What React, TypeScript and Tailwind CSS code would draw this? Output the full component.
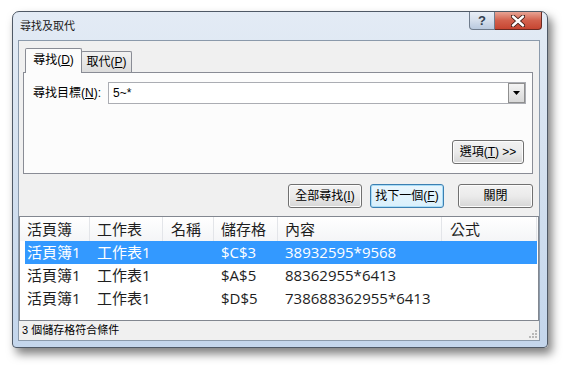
const cols = [
  { label: "活頁簿", w: "w-[70px]", pl: "pl-[7px]" },
  { label: "工作表", w: "w-[73px]", pl: "pl-[7px]" },
  { label: "名稱", w: "w-[51px]", pl: "pl-[8px]" },
  { label: "儲存格", w: "w-[64px]", pl: "pl-[7px]" },
  { label: "內容", w: "w-[164px]", pl: "pl-[7px]" },
  { label: "公式", w: "w-[95px]", pl: "pl-[8px]" },
];

const rows = [
  { book: "活頁簿1", sheet: "工作表1", cell: "$C$3", value: "38932595*9568", selected: true },
  { book: "活頁簿1", sheet: "工作表1", cell: "$A$5", value: "88362955*6413" },
  { book: "活頁簿1", sheet: "工作表1", cell: "$D$5", value: "738688362955*6413" },
];

function Btn({ children, wide, primary }: { children: React.ReactNode; wide?: string; primary?: boolean }) {
  return (
    <div
      className={`${wide ?? "w-[74px]"} h-[24px] flex items-center justify-center rounded-[3px] border ${
        primary
          ? "border-[#3c7fb1] shadow-[inset_0_0_0_1px_#a8dcf7] bg-gradient-to-b from-[#eaf6fd] to-[#d9f0fc]"
          : "border-[#707070] shadow-[inset_0_0_0_1px_#fcfcfc] bg-gradient-to-b from-[#f2f2f2] via-[#ebebeb] to-[#d6d6d6]"
      }`}
    >
      {children}
    </div>
  );
}

export default function App() {
  return (
    <div className="w-[567px] h-[368px] bg-white pl-[12px] pt-[11px] font-['Liberation_Sans','Noto_Sans_CJK_TC',sans-serif] text-[12px] text-black">
      <div className="w-[536px] h-[337px] flex flex-col rounded-t-[7px] rounded-b-[4px] border border-[#4f5966] bg-gradient-to-b from-[#e3ebf5] via-[#d3e0ef] to-[#c4d6ec] pl-[5px] pr-[7px] pb-[6px] shadow-[4px_6px_10px_rgba(0,0,0,0.5)]">
        {/* title bar */}
        <div className="h-[28px] flex items-start">
          <span className="ml-[2px] mt-[6px] text-[11px] text-[#1a1a1a]">尋找及取代</span>
          <div className="ml-auto -mr-[2px] flex">
            <div className="w-[26px] h-[18px] flex items-center justify-center rounded-bl-[4px] border border-[#6f7c8c] border-t-0 bg-gradient-to-b from-[#e8eef6] via-[#d5dfec] to-[#b9c9de] text-[13px] font-bold text-[#34404e] leading-none">
              ?
            </div>
            <div className="w-[47px] h-[18px] flex items-center justify-center rounded-br-[4px] border border-l-0 border-t-0 border-[#6b2a22] bg-gradient-to-b from-[#e7a394] via-[#d2604c] to-[#c64531]">
              <svg width="14" height="12" viewBox="0 0 14 12">
                <path d="M2 1.5 L12 10.5 M12 1.5 L2 10.5" stroke="#3b1a14" strokeWidth="4.2" strokeLinecap="round" />
                <path d="M2 1.5 L12 10.5 M12 1.5 L2 10.5" stroke="#ffffff" strokeWidth="2.4" strokeLinecap="round" />
              </svg>
            </div>
          </div>
        </div>

        {/* client */}
        <div className="flex-1 flex flex-col bg-[#f0f0f0] border border-[#8b9aab]">
          <div className="pt-[7px] pl-[4px] pr-[6px]">
            <div className="flex items-end pl-[2px] h-[24px]">
              <div className="relative z-10 w-[57px] h-[25px] -mb-[1px] border border-b-0 border-[#898c95] bg-[#fcfcfc] rounded-t-[2px] flex items-center justify-center pb-[2px]">
                尋找(<u>D</u>)
              </div>
              <div className="w-[51px] h-[21px] -ml-[1px] border border-b-0 border-[#898c95] rounded-t-[2px] bg-gradient-to-b from-[#f2f2f2] to-[#dcdcdc] flex items-center justify-center">
                取代(<u>P</u>)
              </div>
            </div>
            <div className="h-[102px] border border-[#898c95] bg-[#fcfcfc] flex flex-col">
              <div className="mt-[9px] flex items-center">
                <span className="w-[84px] pl-[9px]">
                  尋找目標(<u>N</u>):
                </span>
                <div className="flex-1 mr-[6px] h-[22px] border border-[#abadb3] bg-white flex items-center">
                  <span className="pl-[4px] flex-1">5~*</span>
                  <div className="w-[17px] h-[20px] border border-[#8f8f8f] bg-gradient-to-b from-[#f4f4f4] to-[#d8d8d8] flex items-center justify-center">
                    <svg width="7" height="4" viewBox="0 0 7 4">
                      <path d="M0 0 L7 0 L3.5 4 Z" fill="#000" />
                    </svg>
                  </div>
                </div>
              </div>
              <div className="mt-auto self-end mr-[8px] mb-[9px]">
                <Btn wide="w-[72px]">
                  選項(<u>T</u>) &gt;&gt;
                </Btn>
              </div>
            </div>
            <div className="mt-[10px] flex justify-end">
              <Btn>
                全部尋找(<u>I</u>)
              </Btn>
              <div className="w-[8px]" />
              <Btn primary>
                找下一個(<u>F</u>)
              </Btn>
              <div className="w-[14px]" />
              <Btn wide="w-[75px]">關閉</Btn>
            </div>
          </div>

          {/* result list */}
          <div className="mt-[8px] flex-1 border border-[#828790] bg-white text-[15px] text-[#1e1e1e] font-['Open_Sans','Noto_Sans_CJK_TC',sans-serif] flex flex-col">
            <div className="h-[24px] flex bg-gradient-to-b from-white to-[#f4f5f7]">
              {cols.map((c) => (
                <div key={c.label} className={`${c.w} ${c.pl} h-full flex items-center border-r border-[#e3e5e9]`}>
                  {c.label}
                </div>
              ))}
            </div>
            <div className="ml-[5px] mr-[1px]">
              {rows.map((r, i) => (
                <div key={i} className={`h-[23px] flex items-center ${r.selected ? "bg-[#3399ff] text-white" : ""}`}>
                  <div className="w-[65px] pl-[2px]">{r.book}</div>
                  <div className="w-[73px] pl-[7px]">{r.sheet}</div>
                  <div className="w-[51px]" />
                  <div className="w-[64px] pl-[7px]">{r.cell}</div>
                  <div className="w-[164px] pl-[7px]">{r.value}</div>
                  <div className="w-[95px]" />
                </div>
              ))}
            </div>
          </div>

          {/* status bar */}
          <div className="h-[19px] flex items-center justify-between pl-[3px] text-[11px] bg-[#f0f0f0]">
            <span>3 個儲存格符合條件</span>
            <svg width="11" height="11" viewBox="0 0 11 11" className="self-end mb-[1px] mr-[1px]">
              {[
                [8, 8], [5, 8], [2, 8], [8, 5], [5, 5], [8, 2],
              ].map(([x, y], i) => (
                <rect key={i} x={x} y={y} width="2" height="2" fill="#b8b8b8" />
              ))}
            </svg>
          </div>
        </div>
      </div>
    </div>
  );
}
